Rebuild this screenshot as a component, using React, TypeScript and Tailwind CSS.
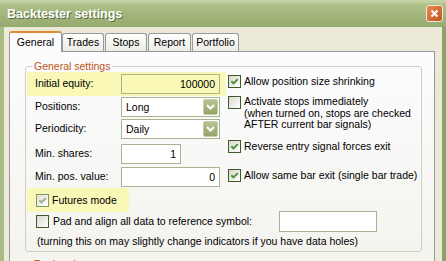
import React from "react";

function CheckBox({ checked, disabled }: { checked?: boolean; disabled?: boolean }) {
  return (
    <div
      className={
        disabled
          ? "w-[13px] h-[13px] shrink-0 border border-[#7F9868] bg-linear-to-br from-[#E2E1D6] to-[#FFFFFF] flex items-center justify-center"
          : "w-[13px] h-[13px] shrink-0 border border-[#3E5A2C] bg-linear-to-br from-[#D9D8CC] to-[#FFFFFF] flex items-center justify-center"
      }
    >
      {checked && (
        <svg width="11" height="11" viewBox="0 0 11 11">
          <path
            d="M2.3 5.2 L4.5 7.4 L8.8 3.1"
            stroke={disabled ? "#9DB089" : "#4C9234"}
            strokeWidth="2"
            fill="none"
          />
        </svg>
      )}
    </div>
  );
}

function DropButton() {
  return (
    <div className="w-[15px] h-[16px] rounded-[2px] border border-[#C3CDA6] bg-[linear-gradient(#B7C493,#93A56A)] flex items-center justify-center">
      <svg width="9" height="6" viewBox="0 0 9 6">
        <path d="M1 1 L4.5 4.5 L8 1" stroke="#FFFFFF" strokeWidth="2" fill="none" />
      </svg>
    </div>
  );
}

function Select({ value }: { value: string }) {
  return (
    <div className="w-[99px] h-[20px] border border-[#A9B48E] bg-white flex items-center justify-between pl-[4px] pr-[1px] leading-[18px]">
      <span>{value}</span>
      <DropButton />
    </div>
  );
}

function TextBox({ value, w, bg }: { value: string; w: string; bg?: string }) {
  return (
    <div
      className={
        (bg === "y"
          ? "bg-[#F9F8B6] "
          : "bg-white ") +
        w +
        " h-[20px] border border-[#A9B48E] text-right pr-[4px] leading-[18px]"
      }
    >
      {value}
    </div>
  );
}

export default function App() {
  return (
    <div className="w-[446px] h-[261px] overflow-hidden bg-[#ECE9D8] font-['Liberation_Sans',Arial,sans-serif] text-[10.5px] text-black">
      {/* Title bar */}
      <div className="h-[27px] bg-[linear-gradient(#CAD7AC_0%,#ADBF86_18%,#A2B67C_55%,#95AA6E_100%)] flex items-center justify-between pl-[7px] pr-[3px]">
        <span className="text-white font-bold text-[12.5px] leading-[14px] [text-shadow:1px_1px_0_#5A6D3B]">
          Backtester settings
        </span>
        <div className="w-[17px] h-[17px] rounded-[3px] border border-[#F3E6DA] bg-[linear-gradient(135deg,#E8894E,#C0561F)] flex items-center justify-center">
          <svg width="9" height="9" viewBox="0 0 9 9">
            <path d="M1.5 1.5 L7.5 7.5 M7.5 1.5 L1.5 7.5" stroke="#FFFFFF" strokeWidth="2" />
          </svg>
        </div>
      </div>

      {/* Body */}
      <div className="h-[234px] border-l-[4px] border-r-[4px] border-l-[#A8BB84] border-r-[#8AA266] pl-[5px] pt-[4px]">
        {/* Tabs */}
        <div className="flex items-end h-[20px] relative z-10">
          <div className="w-[53px] h-[21px] mb-[-1px] border-x border-[#919B9C] border-t-[2px] border-t-[#E08A35] rounded-t-[3px] bg-[#FCFCFE] flex items-center justify-center leading-[13px]">
            General
          </div>
          <div className="w-[42px] h-[18px] border-x border-t border-[#919B9C] rounded-t-[3px] bg-linear-to-b from-[#FFFFFF] to-[#ECEBE4] flex items-center justify-center leading-[13px]">
            Trades
          </div>
          <div className="ml-[1px] w-[42px] h-[18px] border-x border-t border-[#919B9C] rounded-t-[3px] bg-linear-to-b from-[#FFFFFF] to-[#ECEBE4] flex items-center justify-center leading-[13px]">
            Stops
          </div>
          <div className="ml-[1px] w-[43px] h-[18px] border-x border-t border-[#919B9C] rounded-t-[3px] bg-linear-to-b from-[#FFFFFF] to-[#ECEBE4] flex items-center justify-center leading-[13px]">
            Report
          </div>
          <div className="ml-[1px] w-[47px] h-[18px] border-x border-t border-[#919B9C] rounded-t-[3px] bg-linear-to-b from-[#FFFFFF] to-[#ECEBE4] flex items-center justify-center leading-[13px]">
            Portfolio
          </div>
        </div>

        {/* Panel */}
        <div className="w-[426px] h-[240px] border border-[#919B9C] bg-linear-to-b from-[#FCFCFE] to-[#F3F2EC] pt-[14px] pl-[15px]">
          {/* General settings group */}
          <div className="relative w-[397px] h-[186px] border border-[#D0D0BF] rounded-[3px]">
            <span className="absolute left-[6px] -top-[7px] px-[2px] bg-[#FBFBFC] text-[#BC561B] leading-[12px]">
              General settings
            </span>
            <div className="flex">
              {/* Left column */}
              <div className="ml-[1px] w-[199px] pt-[5px]">
                <div className="h-[24px] bg-[#F9F8B6] flex items-center">
                  <span className="w-[94px] pl-[8px]">Initial equity:</span>
                  <TextBox value="100000" w="w-[99px]" bg="y" />
                </div>
                <div className="mt-[1px] h-[20px] flex items-center">
                  <span className="w-[94px] pl-[8px]">Positions:</span>
                  <Select value="Long" />
                </div>
                <div className="mt-[2px] h-[20px] flex items-center">
                  <span className="w-[94px] pl-[8px]">Periodicity:</span>
                  <Select value="Daily" />
                </div>
                <div className="mt-[5px] h-[20px] flex items-center">
                  <span className="w-[94px] pl-[8px]">Min. shares:</span>
                  <TextBox value="1" w="w-[60px]" />
                </div>
                <div className="mt-[3px] h-[20px] flex items-center">
                  <span className="w-[94px] pl-[8px]">Min. pos. value:</span>
                  <TextBox value="0" w="w-[99px]" />
                </div>
                <div className="mt-[1px] h-[24px] w-[102px] bg-[#F9F8B6] flex items-center pl-[9px] gap-[3px]">
                  <CheckBox checked disabled />
                  <span className="leading-[13px]">Futures mode</span>
                </div>
              </div>

              {/* Right column */}
              <div className="ml-[2px] pt-[8px]">
                <div className="h-[13px] flex items-center gap-[3px]">
                  <CheckBox checked />
                  <span className="leading-[13px]">Allow position size shrinking</span>
                </div>
                <div className="mt-[8px] h-[35px] flex items-start gap-[3px]">
                  <CheckBox />
                  <span className="leading-[11.5px]">
                    Activate stops immediately
                    <br />
                    (when turned on, stops are checked
                    <br />
                    AFTER current bar signals)
                  </span>
                </div>
                <div className="mt-[9px] h-[13px] flex items-center gap-[3px]">
                  <CheckBox checked />
                  <span className="leading-[13px]">Reverse entry signal forces exit</span>
                </div>
                <div className="mt-[16px] h-[13px] flex items-center gap-[3px]">
                  <CheckBox checked />
                  <span className="leading-[13px]">Allow same bar exit (single bar trade)</span>
                </div>
              </div>
            </div>

            {/* Pad row */}
            <div className="mt-[-1px] h-[21px] flex items-center pl-[10px]">
              <CheckBox />
              <span className="ml-[4px] w-[226px] leading-[13px]">
                Pad and align all data to reference symbol:
              </span>
              <div className="w-[98px] h-[21px] border border-[#A9B48E] bg-white" />
            </div>
            <div className="mt-[3px] pl-[11px] leading-[12px]">
              (turning this on may slightly change indicators if you have data holes)
            </div>
          </div>

          {/* Next group (cut off) */}
          <div className="relative mt-[14px] w-[397px] h-[40px] border border-[#D0D0BF] rounded-[3px]">
            <span className="absolute left-[6px] -top-[9px] px-[2px] bg-[#F5F4EF] text-[#BC561B] leading-[12px]">
              Trade price
            </span>
          </div>
        </div>
      </div>
    </div>
  );
}
